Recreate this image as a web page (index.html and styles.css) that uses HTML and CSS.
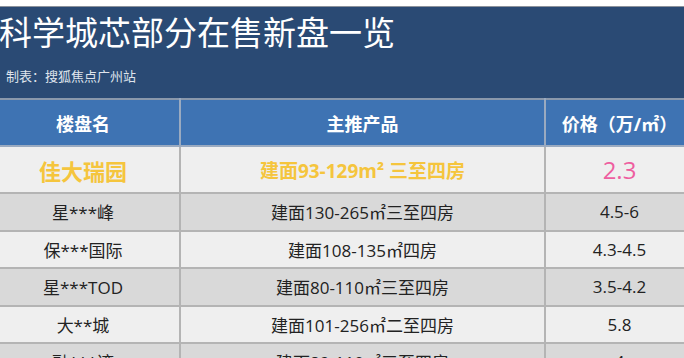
FILE: index.html
```html
<!DOCTYPE html>
<html lang="zh">
<head>
  <meta charset="UTF-8">
  <title>科学城芯部分在售新盘一览</title>
  <link rel="stylesheet" href="styles.css">
</head>
<body>

  <div class="cabecera">
    <h1>科学城芯部分在售新盘一览</h1>
    <p class="fuente">制表：搜狐焦点广州站</p>
  </div>

  <table class="tabla">
    <colgroup>
      <col class="c1">
      <col class="c2">
      <col class="c3">
    </colgroup>
    <thead>
      <tr>
        <th>楼盘名</th>
        <th>主推产品</th>
        <th>价格（万/㎡）</th>
      </tr>
    </thead>
    <tbody>
      <tr class="destacado">
        <td class="nombre">佳大瑞园</td>
        <td class="producto">建面93-129m² 三至四房</td>
        <td class="precio">2.3</td>
      </tr>
      <tr class="oscuro">
        <td>星***峰</td>
        <td>建面130-265㎡三至四房</td>
        <td>4.5-6</td>
      </tr>
      <tr>
        <td>保***国际</td>
        <td>建面108-135㎡四房</td>
        <td>4.3-4.5</td>
      </tr>
      <tr class="oscuro">
        <td>星***TOD</td>
        <td>建面80-110㎡三至四房</td>
        <td>3.5-4.2</td>
      </tr>
      <tr>
        <td>大**城</td>
        <td>建面101-256㎡二至四房</td>
        <td>5.8</td>
      </tr>
      <tr class="oscuro">
        <td>融***湾</td>
        <td>建面89-110㎡三至四房</td>
        <td>4</td>
      </tr>
    </tbody>
  </table>

</body>
</html>
```

FILE: styles.css
```css
body {
  margin: 0;
  padding-top: 6px;
  background: #ffffff;
  font-family: "Open Sans", "Noto Sans CJK SC", sans-serif;
  overflow: hidden;
}

.cabecera {
  background: #2a4a74;
  border-top: 1px solid #8c929c;
  height: 92px;
  box-sizing: border-box;
  padding-top: 6px;
}

.cabecera h1 {
  margin: 0 0 0 -1px;
  font-size: 33px;
  font-weight: normal;
  line-height: 40px;
  color: #ffffff;
  white-space: nowrap;
}

.fuente {
  margin: 14px 0 0 6px;
  font-size: 13px;
  line-height: 18px;
  color: #dfe4ec;
}

.tabla {
  border-collapse: collapse;
  margin-left: -15px;
  width: 708px;
  table-layout: fixed;
  border-top: 2px solid #8a98ab;
}

.c1 { width: 194px; }
.c2 { width: 365px; }
.c3 { width: 149px; }

.tabla th,
.tabla td {
  border: 2px solid #b4b4b4;
  text-align: center;
  padding: 0;
  white-space: nowrap;
}

.tabla th {
  background: #3e73b3;
  color: #ffffff;
  font-size: 18px;
  font-weight: bold;
  height: 45px;
  border-color: #9aaac0;
  border-top: none;
}

.tabla td {
  background: #efefef;
  color: #222222;
  font-size: 17px;
  height: 35.5px;
}

.tabla tr.oscuro td {
  background: #d9d9d9;
}

.destacado td {
  height: 45px;
}

.destacado .nombre {
  color: #f5c53d;
  font-size: 22px;
  font-weight: bold;
}

.destacado .producto {
  color: #f5c53d;
  font-size: 19px;
  font-weight: bold;
}

.destacado .precio {
  color: #ee5ea0;
  font-size: 24px;
}
```
